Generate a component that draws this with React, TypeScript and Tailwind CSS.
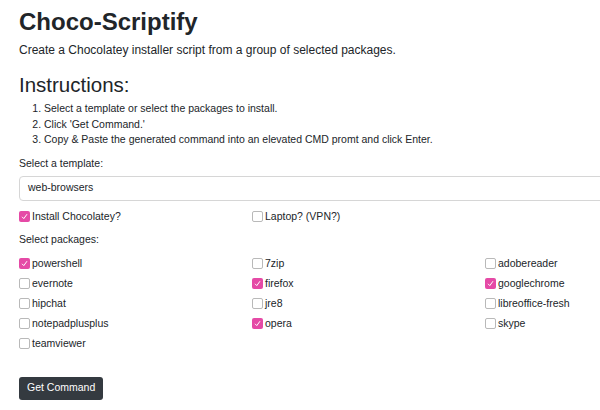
import React, { useState } from 'react';

const packages = [
  'powershell', '7zip', 'adobereader',
  'evernote', 'firefox', 'googlechrome',
  'hipchat', 'jre8', 'libreoffice-fresh',
  'notepadplusplus', 'opera', 'skype',
  'teamviewer',
];

const Box: React.FC<{ checked: boolean }> = ({ checked }) =>
  checked ? (
    <span className="w-[11px] h-[11px] rounded-[2px] bg-[#e54aa6] flex items-center justify-center shrink-0">
      <svg width="9" height="9" viewBox="0 0 9 9">
        <path d="M2 4.8 L3.8 6.6 L7 2.2" fill="none" stroke="#fff" strokeWidth="1" />
      </svg>
    </span>
  ) : (
    <span className="w-[11px] h-[11px] rounded-[2px] border border-[#b9b9b9] bg-white shrink-0" />
  );

const Check: React.FC<{ label: string; checked: boolean; onToggle: () => void }> = ({ label, checked, onToggle }) => (
  <label onClick={onToggle} className="flex items-center gap-[2px] h-[20px] cursor-pointer text-[10.5px] text-[#212529]">
    <Box checked={checked} />
    <span>{label}</span>
  </label>
);

const App: React.FC = () => {
  const [picked, setPicked] = useState<string[]>(['powershell', 'firefox', 'googlechrome', 'opera']);
  const [choco, setChoco] = useState(true);
  const [laptop, setLaptop] = useState(false);

  const toggle = (p: string) =>
    setPicked(picked.includes(p) ? picked.filter(x => x !== p) : [...picked, p]);

  return (
    <div className="w-[600px] h-[410px] overflow-hidden bg-white text-[#212529]" style={{ fontFamily: '"Liberation Sans", Arial, sans-serif' }}>
      <div className="w-[718px] pl-[19px] pt-[6px]">
        <h1 className="text-[24px] leading-[32px] font-bold">Choco-Scriptify</h1>
        <p className="text-[12px] leading-[16px] mt-[4px]">Create a Chocolatey installer script from a group of selected packages.</p>
        <h2 className="text-[20.5px] leading-[26px] mt-[14px]">Instructions:</h2>
        <ol className="list-decimal pl-[25px] text-[10.5px] leading-[15.5px] mt-[3px]">
          <li>Select a template or select the packages to install.</li>
          <li>Click 'Get Command.'</li>
          <li>Copy &amp; Paste the generated command into an elevated CMD promt and click Enter.</li>
        </ol>
        <div className="text-[10.5px] leading-[16px] mt-[7px]">Select a template:</div>
        <div className="mt-[5px] h-[25px] border border-[#d6d6d6] rounded-[4px] flex items-center px-[8px] text-[10.5px]">web-browsers</div>
        <div className="grid grid-cols-3 mt-[6px]">
          <Check label="Install Chocolatey?" checked={choco} onToggle={() => setChoco(!choco)} />
          <Check label="Laptop? (VPN?)" checked={laptop} onToggle={() => setLaptop(!laptop)} />
        </div>
        <div className="text-[10.5px] leading-[16px] mt-[4px]">Select packages:</div>
        <div className="grid grid-cols-3 mt-[7px]">
          {packages.map(p => (
            <Check key={p} label={p} checked={picked.includes(p)} onToggle={() => toggle(p)} />
          ))}
        </div>
        <button className="mt-[23px] h-[23px] px-[8px] rounded-[3px] bg-[#343a40] text-white text-[10.5px] block">Get Command</button>
        <div className="mt-[10px] border-t border-[#eeeeee]" />
      </div>
    </div>
  );
};

export default App;
